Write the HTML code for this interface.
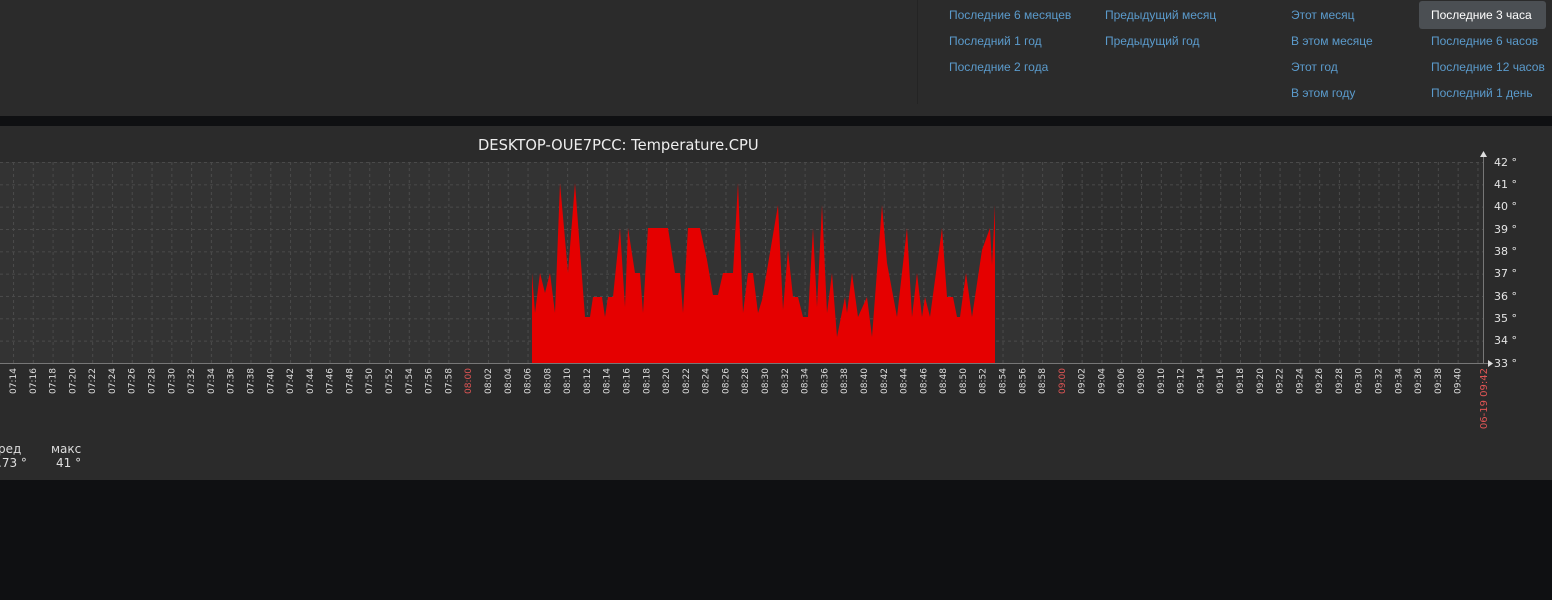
<!DOCTYPE html>
<html><head><meta charset="utf-8"><style>
body{margin:0;width:1552px;height:600px;background:#0f1012;position:relative;overflow:hidden;font-family:"Liberation Sans","DejaVu Sans",sans-serif}
.top{position:absolute;left:0;top:0;width:1552px;height:116px;background:#2b2b2b}
.sep{position:absolute;left:917px;top:0;width:1px;height:104px;background:#242424}
.l{position:absolute;font-size:12px;color:#5b9bcc;white-space:nowrap;line-height:14px}
.sel{position:absolute;left:1419px;top:1px;width:127px;height:28px;background:#4b4f53;border-radius:3px;color:#fff;font-size:12px;line-height:28px;text-indent:12px}
.panel{position:absolute;left:0;top:126px;width:1552px;height:354px;background:#2b2b2b}
svg{position:absolute;left:0;top:0}
</style></head><body>
<div class="top"><div class="sep"></div>
<div class="l" style="left:949px;top:8px">Последние 6 месяцев</div>
<div class="l" style="left:949px;top:34px">Последний 1 год</div>
<div class="l" style="left:949px;top:60px">Последние 2 года</div>
<div class="l" style="left:1105px;top:8px">Предыдущий месяц</div>
<div class="l" style="left:1105px;top:34px">Предыдущий год</div>
<div class="l" style="left:1291px;top:8px">Этот месяц</div>
<div class="l" style="left:1291px;top:34px">В этом месяце</div>
<div class="l" style="left:1291px;top:60px">Этот год</div>
<div class="l" style="left:1291px;top:86px">В этом году</div>
<div class="sel">Последние 3 часа</div>
<div class="l" style="left:1431px;top:34px">Последние 6 часов</div>
<div class="l" style="left:1431px;top:60px">Последние 12 часов</div>
<div class="l" style="left:1431px;top:86px">Последний 1 день</div>
</div>
<div class="panel"></div>
<svg width="1552" height="600" xmlns="http://www.w3.org/2000/svg">
<defs>
<pattern id="gv" patternUnits="userSpaceOnUse" x="13" y="0" width="19.79" height="600"><line x1="0.5" y1="0" x2="0.5" y2="600" stroke="#4a4a4a" stroke-dasharray="3,3"/></pattern>
<pattern id="gh" patternUnits="userSpaceOnUse" x="0" y="162" width="1600" height="22.33"><line x1="0" y1="0.5" x2="1600" y2="0.5" stroke="#4a4a4a" stroke-dasharray="3,3"/></pattern>
</defs>
<rect x="0" y="162" width="1062" height="201" fill="#333"/>
<rect x="1062" y="162" width="421" height="201" fill="#2e2e2e"/>
<rect x="0" y="162" width="1483" height="201" fill="url(#gv)"/>
<rect x="0" y="162" width="1483" height="201" fill="url(#gh)"/>
<polygon fill="#e50000" points="532,363 532,273 535,313 540,273 545,293 550,273 555,313 560,183 568,273 575,183 585,317 590,317 593,297 602,297 605,317 608,297 613,297 620,228 625,307 628,228 635,273 640,273 643,313 648,228 668,228 675,273 680,273 683,313 688,228 700,228 707,260 713,295 718,295 723,273 733,273 738,183 743,313 748,273 753,273 758,313 762,300 778,205 783,310 788,250 793,297 798,297 803,317 808,317 813,228 817,307 822,205 827,313 832,273 837,337 845,297 847,313 852,273 858,317 867,297 872,337 882,205 887,263 897,317 907,228 912,317 917,273 922,317 925,297 930,317 942,228 947,297 953,297 957,317 960,317 966,273 972,317 982,250 990,228 992,265 995,205 995,363"/>
<line x1="0" y1="363.5" x2="1488" y2="363.5" stroke="#777"/>
<polygon points="1488,360 1493,363.5 1488,367" fill="#ddd"/>
<line x1="1483.5" y1="156" x2="1483.5" y2="364" stroke="#777"/>
<polygon points="1480,157 1483.5,151 1487,157" fill="#ddd"/>
<text x="478" y="150" font-family="DejaVu Sans,sans-serif" font-size="14.7" fill="#eee">DESKTOP-OUE7PCC: Temperature.CPU</text>
<g font-family="DejaVu Sans,sans-serif" font-size="11" fill="#e4e4e4">
<text x="1494" y="166">42 °</text><text x="1494" y="188">41 °</text><text x="1494" y="210">40 °</text><text x="1494" y="233">39 °</text><text x="1494" y="255">38 °</text><text x="1494" y="277">37 °</text><text x="1494" y="300">36 °</text><text x="1494" y="322">35 °</text><text x="1494" y="344">34 °</text><text x="1494" y="367">33 °</text>
</g>
<g font-family="DejaVu Sans,sans-serif" font-size="9" fill="#ddd" text-anchor="end">
<text transform="translate(16,368) rotate(-90)">07:14</text>
<text transform="translate(35.8,368) rotate(-90)">07:16</text>
<text transform="translate(55.6,368) rotate(-90)">07:18</text>
<text transform="translate(75.4,368) rotate(-90)">07:20</text>
<text transform="translate(95.2,368) rotate(-90)">07:22</text>
<text transform="translate(115,368) rotate(-90)">07:24</text>
<text transform="translate(134.7,368) rotate(-90)">07:26</text>
<text transform="translate(154.5,368) rotate(-90)">07:28</text>
<text transform="translate(174.3,368) rotate(-90)">07:30</text>
<text transform="translate(194.1,368) rotate(-90)">07:32</text>
<text transform="translate(213.9,368) rotate(-90)">07:34</text>
<text transform="translate(233.7,368) rotate(-90)">07:36</text>
<text transform="translate(253.5,368) rotate(-90)">07:38</text>
<text transform="translate(273.3,368) rotate(-90)">07:40</text>
<text transform="translate(293.1,368) rotate(-90)">07:42</text>
<text transform="translate(312.9,368) rotate(-90)">07:44</text>
<text transform="translate(332.6,368) rotate(-90)">07:46</text>
<text transform="translate(352.4,368) rotate(-90)">07:48</text>
<text transform="translate(372.2,368) rotate(-90)">07:50</text>
<text transform="translate(392,368) rotate(-90)">07:52</text>
<text transform="translate(411.8,368) rotate(-90)">07:54</text>
<text transform="translate(431.6,368) rotate(-90)">07:56</text>
<text transform="translate(451.4,368) rotate(-90)">07:58</text>
<text transform="translate(471.2,368) rotate(-90)" fill="#e05555">08:00</text>
<text transform="translate(491,368) rotate(-90)">08:02</text>
<text transform="translate(510.8,368) rotate(-90)">08:04</text>
<text transform="translate(530.5,368) rotate(-90)">08:06</text>
<text transform="translate(550.3,368) rotate(-90)">08:08</text>
<text transform="translate(570.1,368) rotate(-90)">08:10</text>
<text transform="translate(589.9,368) rotate(-90)">08:12</text>
<text transform="translate(609.7,368) rotate(-90)">08:14</text>
<text transform="translate(629.5,368) rotate(-90)">08:16</text>
<text transform="translate(649.3,368) rotate(-90)">08:18</text>
<text transform="translate(669.1,368) rotate(-90)">08:20</text>
<text transform="translate(688.9,368) rotate(-90)">08:22</text>
<text transform="translate(708.7,368) rotate(-90)">08:24</text>
<text transform="translate(728.4,368) rotate(-90)">08:26</text>
<text transform="translate(748.2,368) rotate(-90)">08:28</text>
<text transform="translate(768,368) rotate(-90)">08:30</text>
<text transform="translate(787.8,368) rotate(-90)">08:32</text>
<text transform="translate(807.6,368) rotate(-90)">08:34</text>
<text transform="translate(827.4,368) rotate(-90)">08:36</text>
<text transform="translate(847.2,368) rotate(-90)">08:38</text>
<text transform="translate(867,368) rotate(-90)">08:40</text>
<text transform="translate(886.8,368) rotate(-90)">08:42</text>
<text transform="translate(906.6,368) rotate(-90)">08:44</text>
<text transform="translate(926.3,368) rotate(-90)">08:46</text>
<text transform="translate(946.1,368) rotate(-90)">08:48</text>
<text transform="translate(965.9,368) rotate(-90)">08:50</text>
<text transform="translate(985.7,368) rotate(-90)">08:52</text>
<text transform="translate(1005.5,368) rotate(-90)">08:54</text>
<text transform="translate(1025.3,368) rotate(-90)">08:56</text>
<text transform="translate(1045.1,368) rotate(-90)">08:58</text>
<text transform="translate(1064.9,368) rotate(-90)" fill="#e05555">09:00</text>
<text transform="translate(1084.7,368) rotate(-90)">09:02</text>
<text transform="translate(1104.5,368) rotate(-90)">09:04</text>
<text transform="translate(1124.2,368) rotate(-90)">09:06</text>
<text transform="translate(1144,368) rotate(-90)">09:08</text>
<text transform="translate(1163.8,368) rotate(-90)">09:10</text>
<text transform="translate(1183.6,368) rotate(-90)">09:12</text>
<text transform="translate(1203.4,368) rotate(-90)">09:14</text>
<text transform="translate(1223.2,368) rotate(-90)">09:16</text>
<text transform="translate(1243,368) rotate(-90)">09:18</text>
<text transform="translate(1262.8,368) rotate(-90)">09:20</text>
<text transform="translate(1282.6,368) rotate(-90)">09:22</text>
<text transform="translate(1302.4,368) rotate(-90)">09:24</text>
<text transform="translate(1322.1,368) rotate(-90)">09:26</text>
<text transform="translate(1341.9,368) rotate(-90)">09:28</text>
<text transform="translate(1361.7,368) rotate(-90)">09:30</text>
<text transform="translate(1381.5,368) rotate(-90)">09:32</text>
<text transform="translate(1401.3,368) rotate(-90)">09:34</text>
<text transform="translate(1421.1,368) rotate(-90)">09:36</text>
<text transform="translate(1440.9,368) rotate(-90)">09:38</text>
<text transform="translate(1460.7,368) rotate(-90)">09:40</text>
<text transform="translate(1487,368) rotate(-90)" fill="#e05555" font-size="10">06-19 09:42</text>
</g>
<g font-family="DejaVu Sans,sans-serif" font-size="12" fill="#ddd">
<text x="-2" y="453">ред</text><text x="51" y="453">макс</text>
<text x="-2" y="467">.73 °</text><text x="56" y="467">41 °</text>
</g>
</svg>
</body></html>
